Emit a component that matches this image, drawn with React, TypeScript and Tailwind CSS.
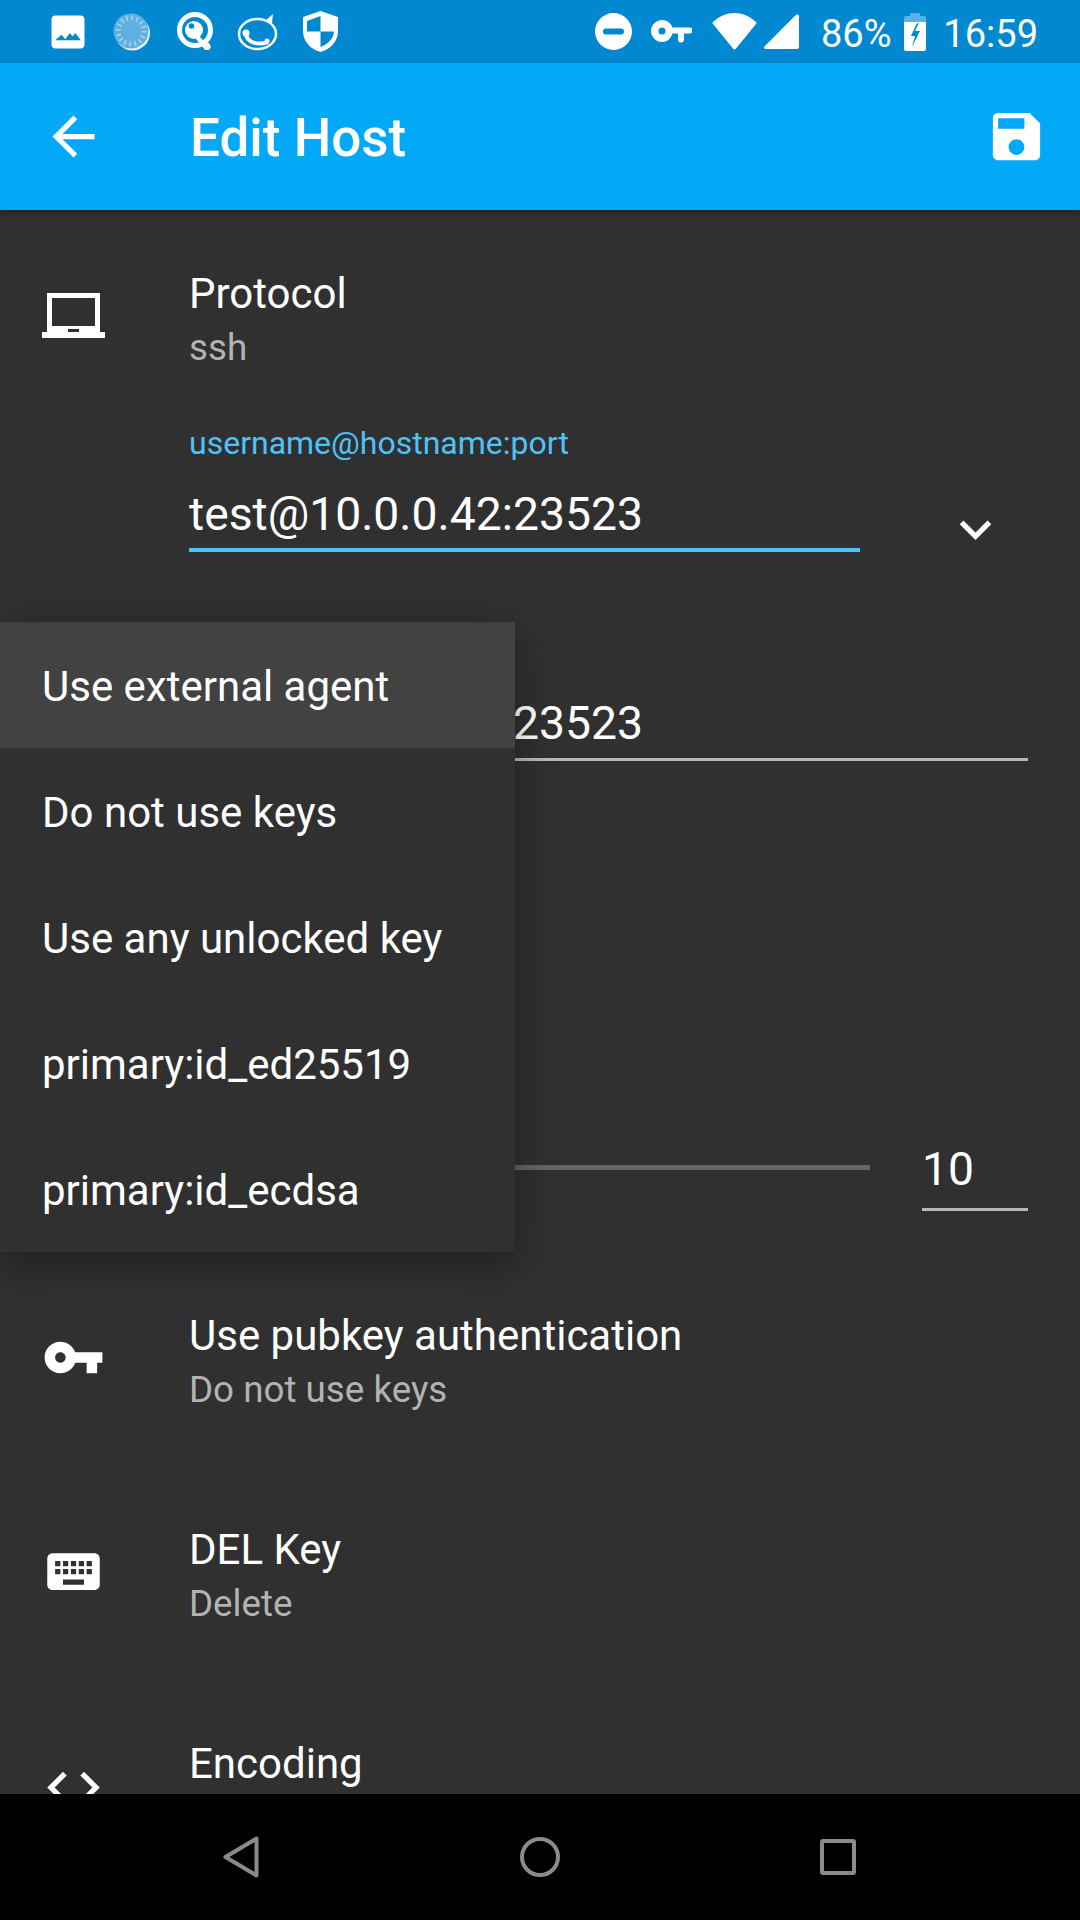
const keyPath = 'M12.65 10C11.83 7.67 9.61 6 7 6c-3.31 0-6 2.69-6 6s2.69 6 6 6c2.61 0 4.83-1.67 5.65-4H17v4h4v-4h2v-4H12.65zM7 14c-1.1 0-2-.9-2-2s.9-2 2-2 2 .9 2 2-.9 2-2 2z';

function Material({ d, className }: { d: string; className: string }) {
  return (
    <svg viewBox="0 0 24 24" fill="currentColor" className={className}>
      <path d={d} />
    </svg>
  );
}

function StatusBar() {
  return (
    <div className="flex h-[63px] shrink-0 items-center bg-[#0288d1] text-white">
      <Material d="M21 19V5c0-1.1-.9-2-2-2H5c-1.1 0-2 .9-2 2v14c0 1.1.9 2 2 2h14c1.1 0 2-.9 2-2zM8.5 13.5l2 2.5 2.5-3.5 1.5 1.8 1.5-1.8 3 4H5z" className="ml-[46px] h-[44px] w-[44px]" />

      {/* sync spinner */}
      <svg viewBox="0 0 38 38" className="ml-[23px] h-[38px] w-[38px]">
        <circle cx="19.5" cy="20" r="17.5" fill="#fff" fillOpacity="0.9" />
        <circle cx="18" cy="18" r="17.5" fill="#5eb0e2" />
        <circle cx="18" cy="18" r="13" fill="none" stroke="#a9d4ef" strokeWidth="5" strokeDasharray="1.6 3.5" />
      </svg>

      {/* key in a ring */}
      <svg viewBox="0 0 38 40" fill="none" className="ml-[26px] h-[40px] w-[38px]">
        <circle cx="18" cy="18" r="15.5" stroke="#fff" strokeWidth="5" />
        <circle cx="17" cy="18" r="9" fill="#fff" />
        <path d="M20 22l5 5 1 1 2 1 2 2 2 0 2 4-2 3-4 0-9-11z" fill="#fff" />
        <circle cx="14.500" cy="14" r="2.800" fill="#0288d1" />
      </svg>

      {/* chat ring with handset */}
      <svg viewBox="0 0 42 38" fill="none" className="ml-[22px] h-[38px] w-[42px]">
        <ellipse cx="20.5" cy="21" rx="18.5" ry="15" stroke="#fff" strokeWidth="2.5" />
        <path d="M28 8l8-7-1 9z" fill="#fff" />
        <path d="M9 21c1 8 11 12 22 8" stroke="#fff" strokeWidth="4" />
        <circle cx="9" cy="20" r="3.5" fill="#fff" />
        <circle cx="30" cy="28" r="2.5" fill="#fff" />
      </svg>

      {/* shield */}
      <svg viewBox="0 0 35 41" className="ml-[24px] h-[41px] w-[35px]">
        <path fillRule="evenodd" d="M17.5 0L35 6v14c0 10-7.5 18.500-17.500 21C7.500 38.500 0 30 0 20V6zM17.500 5L4 10v10.500h13.500zM17.500 20.500V36c7-2.500 13-8 13.500-15.500z" fill="#fff" />
      </svg>

      {/* do not disturb */}
      <svg viewBox="0 0 37 37" className="ml-[257px] h-[37px] w-[37px]">
        <path fillRule="evenodd" fill="#fff" d="M18.500 0a18.500 18.500 0 1 0 0 37a18.500 18.500 0 1 0 0-37zM11 15.500h15a3 3 0 0 1 0 6H11a3 3 0 0 1 0-6z" />
      </svg>

      {/* vpn key */}
      <svg viewBox="0 0 41 23" className="ml-[19px] h-[23px] w-[41px]">
        <path fillRule="evenodd" fill="#fff" d="M11 0c5 0 9 3 10.500 7.500h17a2.800 2.800 0 0 1 0 6H33v6a3 3 0 0 1-6 0v-6h-5.500C20 18.500 16 22 11 22 5 22 0 17 0 11S5 0 11 0zm0 7.500a3.500 3.500 0 1 0 0 7a3.500 3.500 0 1 0 0-7z" />
      </svg>

      {/* wifi */}
      <svg viewBox="0 0 45 37" className="ml-[20px] h-[37px] w-[45px]">
        <path fill="#fff" d="M1 9C14-3 31-3 44 9c.6.6.6 1.300.2 1.800L24 35.500c-.9 1.200-2.100 1.200-3 0L.8 10.800C.4 10.300.4 9.600 1 9z" />
      </svg>

      {/* signal */}
      <svg viewBox="0 0 35 35" className="ml-[7px] h-[35px] w-[35px]">
        <path fill="#fff" d="M32 .8c1.300-1.200 3-.4 3 1.200v31a2 2 0 0 1-2 2H1.500c-1.400 0-2-1.500-1-2.500z" />
      </svg>

      <span className="ml-[22px] mt-[4px] text-[38px] leading-none">86%</span>

      {/* battery charging */}
      <svg viewBox="0 0 22 38" className="ml-[12px] h-[38px] w-[22px]">
        <path fill="#5eb0e2" d="M6 0h10v3h4a2 2 0 0 1 2 2v6H0V5a2 2 0 0 1 2-2h4z" />
        <path fillRule="evenodd" fill="#fff" d="M0 9h22v27a2 2 0 0 1-2 2H2a2 2 0 0 1-2-2zM13 10L7 23h4l-3 11 8-16h-5l4-8z" />
      </svg>

      <span className="ml-auto mr-[42px] mt-[4px] text-[38px] leading-none">16:59</span>
    </div>
  );
}

function AppBar() {
  return (
    <div className="relative z-10 flex h-[147px] shrink-0 items-center bg-[#03a9f6] text-white shadow-[0_2px_6px_rgba(0,0,0,0.3)]">
      <Material d="M20 11H7.830l5.590-5.590L12 4l-8 8 8 8 1.410-1.410L7.830 13H20v-2z" className="ml-[42px] h-[63px] w-[63px]" />
      <span className="ml-[85px] pt-[4px] text-[53px] font-medium leading-none">Edit Host</span>
      <Material d="M17 3H5c-1.110 0-2 .9-2 2v14c0 1.100.89 2 2 2h14c1.100 0 2-.9 2-2V7l-4-4zm-5 16c-1.660 0-3-1.340-3-3s1.340-3 3-3 3 1.340 3 3-1.340 3-3 3zm3-10H5V5h10v4z" className="ml-auto mr-[32px] h-[63px] w-[63px]" />
    </div>
  );
}

function Row({ icon, title, sub, className }: { icon: React.ReactNode; title: string; sub?: string; className: string }) {
  return (
    <div className={`flex items-start ${className}`}>
      <div className="ml-[42px] mt-[17px] h-[63px] w-[63px] shrink-0">{icon}</div>
      <div className="ml-[84px]">
        <div className="text-[42px] leading-[54px] text-white">{title}</div>
        {sub && <div className="text-[36.75px] leading-[54px] text-[#b3b3b3]">{sub}</div>}
      </div>
    </div>
  );
}

const menuItems = ['Use external agent', 'Do not use keys', 'Use any unlocked key', 'primary:id_ed25519', 'primary:id_ecdsa'];

export default function App() {
  return (
    <div className="relative flex h-[1920px] w-[1080px] flex-col overflow-hidden bg-black font-['Roboto',sans-serif]">
      <StatusBar />
      <AppBar />

      <div className="min-h-0 flex-1 overflow-hidden bg-[#303030] pt-[57px]">
        <Row
          className=""
          title="Protocol"
          sub="ssh"
          icon={
            <svg viewBox="0 0 63 63" className="h-[63px] w-[63px]">
              <path fillRule="evenodd" fill="#fff" d="M5 9h53v39h5v6H0v-6h5zM10 14v28h43V14zM26 45v3h11v-3z" />
            </svg>
          }
        />

        <div className="ml-[189px] mt-[50px] w-[671px]">
          <div className="text-[32px] leading-[36px] text-[#4fc3f7]">username@hostname:port</div>
          <div className="relative mt-[21px] flex h-[70px] items-center border-b-[4px] border-[#4fc3f7] pb-[2px] text-[46.25px] leading-none text-white">
            test@10.0.0.42:23523
            <Material d="M7.410 8.590L12 13.170l4.590-4.580L18 10l-6 6-6-6 1.410-1.410z" className="absolute left-[755px] top-[16px] h-[63px] w-[63px]" />
          </div>
        </div>

        <div className="ml-[189px] mt-[135px] flex h-[74px] w-[839px] items-center border-b-[3px] border-[#b8b8b8] pt-[1px] text-[46.25px] leading-none text-white">
          test@10.0.0.42:23523
        </div>

        <div className="ml-[189px] mt-[374px] flex h-[79px] w-[839px] items-start">
          <div className="mt-[30px] h-[5px] w-[681px] bg-[#646464]" />
          <div className="ml-[52px] h-[76px] flex-1 border-b-[3px] border-[#b8b8b8] pt-[7px] text-[46.25px] leading-[54px] text-white">10</div>
        </div>

        <Row
          className="mt-[95px]"
          title="Use pubkey authentication"
          sub="Do not use keys"
          icon={<Material d={keyPath} className="h-[63px] w-[63px] text-white" />}
        />
        <Row
          className="mt-[106px]"
          title="DEL Key"
          sub="Delete"
          icon={<Material d="M20 5H4c-1.100 0-1.990.9-1.990 2L2 17c0 1.100.9 2 2 2h16c1.100 0 2-.9 2-2V7c0-1.100-.9-2-2-2zm-9 3h2v2h-2V8zm0 3h2v2h-2v-2zM8 8h2v2H8V8zm0 3h2v2H8v-2zm-1 2H5v-2h2v2zm0-3H5V8h2v2zm9 7H8v-2h8v2zm0-4h-2v-2h2v2zm0-3h-2V8h2v2zm3 3h-2v-2h2v2zm0-3h-2V8h2v2z" className="h-[63px] w-[63px] text-white" />}
        />
        <Row
          className="mt-[106px]"
          title="Encoding"
          icon={<Material d="M9.400 16.600L4.800 12l4.600-4.600L8 6l-6 6 6 6 1.400-1.400zm5.200 0l4.600-4.600-4.600-4.600L16 6l6 6-6 6-1.400-1.400z" className="mt-[2px] h-[63px] w-[63px] text-white" />}
        />
      </div>

      {/* popup menu over the form */}
      <div className="absolute left-0 top-[622px] z-20 w-[515px] rounded-br-[3px] rounded-tr-[3px] bg-[#303030] shadow-[0_12px_40px_rgba(0,0,0,0.35)]">
        {menuItems.map((item, i) => (
          <div key={item} className={`flex h-[126px] items-center pl-[42px] pt-[4px] text-[42px] leading-none text-white ${i === 0 ? 'bg-[#424242]' : ''}`}>
            {item}
          </div>
        ))}
      </div>

      <div className="flex h-[126px] shrink-0 items-center bg-black">
        <svg viewBox="0 0 36 42" className="ml-[223px] h-[42px] w-[36px]">
          <path d="M33.500 2.500v37L2.500 21z" fill="none" stroke="#8a8a8a" strokeWidth="4" strokeLinejoin="round" />
        </svg>
        <svg viewBox="0 0 40 40" className="ml-[261px] h-[40px] w-[40px]">
          <circle cx="20" cy="20" r="18" fill="none" stroke="#8a8a8a" strokeWidth="4" />
        </svg>
        <svg viewBox="0 0 36 36" className="ml-[260px] h-[36px] w-[36px]">
          <rect x="2" y="2" width="32" height="32" rx="1" fill="none" stroke="#8a8a8a" strokeWidth="4" />
        </svg>
      </div>
    </div>
  );
}
